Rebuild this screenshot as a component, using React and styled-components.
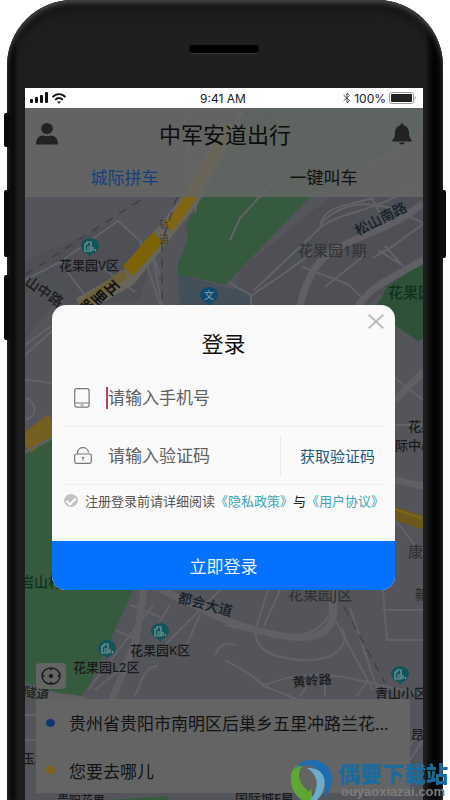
import React from 'react';
import styled, { createGlobalStyle } from 'styled-components';

const GlobalStyle = createGlobalStyle`
  * {
    box-sizing: border-box;
  }

  body {
    margin: 0;
    background: #fff;
    font-family: "Noto Sans", "Noto Sans CJK SC", sans-serif;
  }

  button, input {
    font-family: inherit;
  }
`;

const Page = styled.div`
  position: relative;
  min-height: 100vh;
  padding: 0 7px;
  display: flex;
  overflow: hidden;
`;

const Phone = styled.div`
  flex: 1;
  min-width: 0;
  display: flex;
  flex-direction: column;
  padding: 0 20px 0 18px;
  border-radius: 66px 66px 0 0;
  background: linear-gradient(
    to right,
    #040404 0,
    #0c0c0c 7px,
    #1f1f1f 11px,
    #1f1f1f calc(100% - 18px),
    #020202 calc(100% - 10px)
  );
  box-shadow: inset 0 3px 5px #4a4a4a, inset 0 8px 16px #101010;
`;

const SideButton = styled.span`
  position: absolute;
  top: ${(props) => props.$top}px;
  ${(props) => props.$side}: 4px;
  width: 6px;
  height: ${(props) => props.$length}px;
  border-radius: 2px;
  background: #0a0a0a;
`;

const TopBezel = styled.div`
  height: 88px;
  padding-top: 10px;
  display: flex;
  align-items: center;
  justify-content: center;
`;

const Speaker = styled.div`
  width: 70px;
  height: 8px;
  border-radius: 4px;
  background: #000;
  box-shadow: 0 1px 1px #333;
`;

const Screen = styled.div`
  flex: 1;
  display: flex;
  flex-direction: column;
`;

const StatusBar = styled.div`
  height: 20px;
  padding: 0 7px 0 5px;
  display: grid;
  grid-template-columns: 1fr auto 1fr;
  align-items: center;
  background: #fff;
  color: #222;
  font-family: Inter, "Liberation Sans", sans-serif;
  font-size: 12px;
`;

const StatusGroup = styled.div`
  display: flex;
  align-items: center;
  gap: 3px;
  justify-content: ${(props) => (props.$end ? 'flex-end' : 'flex-start')};
`;

const AppView = styled.div`
  position: relative;
  flex: 1;
  display: flex;
  flex-direction: column;
  justify-content: space-between;
  background: #54555a;
`;

const MapCanvas = styled.svg`
  position: absolute;
  inset: 0;
  width: 100%;
  height: 100%;
`;

const Header = styled.header`
  position: relative;
  background: rgba(101, 101, 101, 0.86);
`;

const TitleRow = styled.div`
  height: 52px;
  padding: 0 11px;
  display: flex;
  align-items: center;
  justify-content: space-between;
`;

const AppTitle = styled.h1`
  margin: 0;
  font-size: 22px;
  font-weight: 400;
  line-height: 28px;
  color: #0c0c0c;
`;

const IconButton = styled.button`
  display: flex;
  padding: 0;
  border: 0;
  background: none;
`;

const Tabs = styled.nav`
  display: flex;
`;

const Tab = styled.button`
  flex: 1;
  height: 37px;
  padding: 0 0 4px;
  border: 0;
  background: none;
  font-size: 17px;
  color: ${(props) => (props.$active ? '#14407c' : '#111')};
`;

const Footer = styled.div`
  position: relative;
  padding: 0 13px 7px 11px;
  display: flex;
  flex-direction: column;
  align-items: flex-start;
  gap: 10px;
`;

const LocateButton = styled.button`
  width: 30px;
  height: 26px;
  padding: 0;
  display: flex;
  align-items: center;
  justify-content: center;
  border: 0;
  border-radius: 4px;
  background: #626562;
`;

const RouteCard = styled.div`
  align-self: stretch;
  background: #646464;
`;

const RouteRow = styled.div`
  height: 47px;
  padding-left: 10px;
  display: flex;
  align-items: center;
  gap: 14px;
  font-size: 17px;
  white-space: nowrap;
  color: #121212;

  & + & {
    border-top: 1px solid #5f5f5f;
  }
`;

const Dot = styled.span`
  width: 9px;
  height: 8px;
  flex: none;
  border-radius: 50%;
  background: ${(props) => props.$color};
`;

const Overlay = styled.div`
  position: absolute;
  inset: 0;
  padding: 0 28px 13px 27px;
  display: flex;
  align-items: center;
`;

const Dialog = styled.form`
  position: relative;
  flex: 1;
  min-width: 0;
  overflow: hidden;
  border-radius: 14px;
  background: #fafafa;
`;

const CloseButton = styled(IconButton)`
  position: absolute;
  top: 9px;
  right: 11px;
`;

const DialogTitle = styled.h2`
  margin: 0;
  padding: 24px 0 12px;
  text-align: center;
  font-size: 22px;
  font-weight: 400;
  line-height: 28px;
  color: #111;
`;

const FieldRow = styled.div`
  height: 58px;
  margin: 0 10px 0 12px;
  padding-left: 10px;
  display: flex;
  align-items: center;
  border-bottom: 1px solid #f0f0f0;
`;

const FieldIcon = styled.label`
  width: 20px;
  margin-right: 12px;
  display: flex;
`;

const Field = styled.input`
  flex: 1;
  min-width: 0;
  height: 22px;
  padding: 0;
  border: 0;
  border-left: 2px solid ${(props) => (props.$active ? '#b0406c' : 'transparent')};
  outline: none;
  background: none;
  font-size: 17px;
  color: #333;

  &::placeholder {
    color: #606060;
    opacity: 1;
  }
`;

const CodeButton = styled.button`
  flex: none;
  height: 40px;
  padding: 0 10px 0 19px;
  border: 0;
  border-left: 1px solid #ececec;
  background: none;
  font-size: 15px;
  color: #1d587c;
`;

const Agreement = styled.div`
  height: 30px;
  margin-bottom: 26px;
  padding-left: 12px;
  display: flex;
  align-items: center;
  font-size: 13px;
  white-space: nowrap;
  color: #222;

  label {
    color: #555;
  }

  a {
    color: #3ea5b6;
    text-decoration: none;
  }
`;

const Checkbox = styled.input`
  appearance: none;
  width: 14px;
  height: 13px;
  margin: 0 7px 0 0;
  display: flex;
  justify-content: center;
  border-radius: 50%;
  background: #c2c2c2;

  &::after {
    content: '';
    width: 4px;
    height: 7px;
    margin-top: 2px;
    border: solid #fff;
    border-width: 0 2px 2px 0;
    transform: rotate(45deg);
  }
`;

const SubmitButton = styled.button`
  width: 100%;
  height: 49px;
  display: block;
  padding: 0;
  border: 0;
  background: #0572ff;
  font-size: 17px;
  color: #e8f2ff;
`;

const Watermark = styled.div`
  position: absolute;
  right: 2px;
  bottom: 0;
  height: 42px;
  display: flex;
  align-items: flex-start;
  gap: 4px;
`;

const SiteName = styled.div`
  padding-top: 3px;
  text-align: center;
  font-size: 22px;
  font-weight: 900;
  line-height: 24px;
  color: #1b6c9c;
`;

const SiteUrl = styled.div`
  text-align: center;
  font-family: "Liberation Sans", sans-serif;
  font-size: 13px;
  font-weight: 700;
  line-height: 14px;
  color: #7c7c7c;
`;

const SignalIcon = () => (
  <svg width="19" height="12" viewBox="0 0 19 12" fill="#111">
    <rect x="0" y="7" width="3" height="4" rx="1" />
    <rect x="5" y="5" width="3" height="6" rx="1" />
    <rect x="10" y="3" width="3" height="8" rx="1" />
    <rect x="15" y="0" width="3" height="11" rx="1" />
  </svg>
);

const WifiIcon = () => (
  <svg width="14" height="11" viewBox="0 0 14 11" fill="none" stroke="#111" strokeWidth="1.8">
    <path d="M.6 4.2C4.200.2 9.800.2 13.400 4.200" />
    <path d="M3.200 6.800c2.200-2.400 5.400-2.400 7.600 0" />
    <path d="M5 8.600h4L7 10.800z" fill="#111" stroke="none" />
  </svg>
);

const BluetoothIcon = () => (
  <svg width="8" height="12" viewBox="0 0 8 12" fill="none" stroke="#555" strokeWidth="1">
    <path d="M.6 3.200l6 5.200L4 11V1l2.600 2.600-6 5.200" />
  </svg>
);

const BatteryIcon = () => (
  <svg width="27" height="12" viewBox="0 0 27 12">
    <rect x=".5" y=".5" width="24" height="11" rx="2.500" fill="none" stroke="#999" />
    <rect x="2" y="2" width="21" height="8" rx="1" fill="#222" />
    <path d="M25.700 4v4c1.300-.6 1.300-3.400 0-4z" fill="#999" />
  </svg>
);

const UserIcon = () => (
  <svg width="22" height="22" viewBox="0 0 22 22" fill="#222">
    <ellipse cx="11" cy="5.500" rx="5.800" ry="5.500" />
    <path d="M0 21.500c0-6 3-9 7-9 2.500 1 5.500 1 8 0 4 0 7 3 7 9z" />
  </svg>
);

const BellIcon = () => (
  <svg width="20" height="22" viewBox="0 0 20 22" fill="#222">
    <path d="M8.600 2.200C8.600-.4 11.400-.4 11.400 2.200 15 3 17 6 17 9.500c0 4 .6 5.800 2.600 7.500v1.400H.4V17C2.400 15.300 3 13.500 3 9.500 3 6 5 3 8.600 2.200z" />
    <path d="M7 19.500h6c-.8 2.600-5.200 2.600-6 0z" />
  </svg>
);

const CloseIcon = () => (
  <svg width="16" height="15" viewBox="0 0 16 15" stroke="#bdbdbd" strokeWidth="2">
    <path d="M.7.7l14.600 13.600M15.300.7L.7 14.300" />
  </svg>
);

const MobileIcon = () => (
  <svg width="16" height="20" viewBox="0 0 16 20" fill="none" stroke="#777" strokeWidth="1.200">
    <rect x=".7" y=".7" width="14.400" height="18.400" rx="2" />
    <path d="M.7 15h14.400M6.500 17h3" />
  </svg>
);

const LockIcon = () => (
  <svg width="18" height="17" viewBox="0 0 18 17" fill="none" stroke="#777" strokeWidth="1.200">
    <rect x=".7" y="7" width="16.600" height="9.300" rx="1.500" />
    <path d="M3.500 7V5.500c0-6.400 10.800-6.400 11 0M9 10v3.600M7.800 10.500h2.400" />
  </svg>
);

const TargetIcon = () => (
  <svg width="20" height="18" viewBox="0 0 20 18" fill="none" stroke="#1a1a1a" strokeWidth="1.400">
    <ellipse cx="10" cy="9" rx="9" ry="8" />
    <path d="M10 1v2.500M10 14.500v2.500M1 9h2.500M16.500 9h2.500" />
    <circle cx="10" cy="9" r="1.400" fill="#1a1a1a" />
  </svg>
);

const WatermarkLogo = () => (
  <svg width="44" height="42" viewBox="0 0 44 42">
    <path d="M1 24C-1 10 9 4 15 6 7 11 7 22 15 30l4 4 2-4 2 12H12C6 38 2 32 1 24z" fill="#5fa632" />
    <path d="M5 11C15-4 38 0 42 18c1 8-2 16-8 22 2-12 2-22-6-28C21 6 11 6 5 11z" fill="#1d6db0" />
    <path d="M17 10c13-1 20 8 17 20-1 5-4 9-7 12h-7c9-10 10-24-3-32z" fill="#6aaecb" />
  </svg>
);

const Pin = ({ x, y }) => (
  <g transform={`translate(${x} ${y})`}>
    <path d="M-9-1a9 8 0 0118 0c0 4-4 7-7 8l-2 3-2-3c-3-1-7-4-7-8z" fill="#12545a" />
    <path d="M-5 4v-7h2v-2h4v9zM-3 0h3M-3 2h3M3 4V0M5.500 4V2" fill="none" stroke="#7b9a9c" strokeWidth="1.200" />
  </g>
);

const labels = [
  { x: 223, y: 122, size: 13, color: '#404044', text: '镇v区2栋' },
  { x: 59, y: 270, size: 13, text: '花果园V区' },
  { x: 24, y: 284, size: 14, rotate: 34, text: '山中路' },
  { x: 358, y: 236, size: 14, rotate: -27, color: '#16202a', text: '松山南路' },
  { x: 298, y: 256, size: 15, color: '#36363a', text: '花果园1期' },
  { x: 388, y: 298, size: 15, color: '#10301d', text: '花果园' },
  { x: 408, y: 431, size: 13, text: '花果' },
  { x: 382, y: 450, size: 13, text: '国际中心' },
  { x: 408, y: 557, size: 15, color: '#333', text: '康宁' },
  { x: 415, y: 599, size: 13, color: '#2c2c2c', text: '新' },
  { x: 20, y: 587, size: 14, color: '#0f2f1e', text: '岩山村' },
  { x: 177, y: 602, size: 14, rotate: 15, color: '#16202a', text: '都会大道' },
  { x: 288, y: 600, size: 15, color: '#333', text: '花果园J区' },
  { x: 130, y: 655, size: 13, text: '花果园K区' },
  { x: 73, y: 672, size: 13, text: '花果园L2区' },
  { x: 293, y: 687, size: 13, rotate: -5, text: '黄岭路' },
  { x: 375, y: 698, size: 13, text: '青山小区' },
  { x: 23, y: 696, size: 13, rotate: 8, color: '#14241e', text: '隧道' },
  { x: 22, y: 763, size: 13, text: '玉坊' },
  { x: 411, y: 739, size: 13, text: '昂' },
  { x: 57, y: 805, size: 12, text: '贵阳花果' },
  { x: 235, y: 803, size: 13, text: '国际城F星' },
];

const CityMap = () => (
  <MapCanvas viewBox="25 108 398 692" preserveAspectRatio="xMidYMin slice">
    <rect x="25" y="108" width="398" height="692" fill="#54555a" />
    <path d="M25 260L118 221 152 252 140 300 52 305 25 340z" fill="#4e5056" />
    <path d="M240 270L330 197H423V255L370 305H230z" fill="#4f5056" />

    {/* parks and water */}
    <path d="M178 272q14 3 16 6l56 16v14H180z" fill="#445059" />
    <path d="M245 108L203 197 186 224 188 238 178 264v11l16 2 31 8L310 197 423 130V108z" fill="#365a3e" />
    <path d="M423 262L388 286 376 306 395 325 418 341 423 339z" fill="#2f5138" />
    <path d="M25 454l28-15v145l80 6 -24 54 -18 38-12 17-54-17z" fill="#365a3e" />
    <path d="M108 800l60-4v4z" fill="#365a3e" />

    {/* minor roads */}
    <g fill="none" stroke="#626368" strokeWidth="2">
      <path d="M25 280L60 262 118 221 152 252 160 275M60 262l30 40M95 262l40 30M140 243l20 62M150 243l12 62" />
      <path d="M185 108c-2 40 16 80 10 105M230 240l10-22 35-38 30-35 35 20 50-8 20-25" />
      <path d="M228 282l23 13v10M254 290l66-62c20-18 60-15 103-48M252 295l30-20 30-22" />
      <path d="M320 228c2-24 30-22 52-30M320 224c30-30 60-18 74-15l29 14M372 198l12 24M373 258l20-12 30-22M378 250l27 17M385 246l16 18M302 267l46 17 14 14M325 287l40-32" />
      <path d="M25 380c30 2 20 5 35 2M25 420c15-5 10-20 0-22M25 355l28-25M25 345l28-20" />
      <path d="M395 400l28-25M395 378l28 22M395 425h28M395 520l28 35" />
      <path d="M115 630l24 10M130 605l30 12M95 690l36-30M88 690l65-85M134 696c8-10 8-30 24-30M200 615l-18 40M170 605l-16 26" />
      <path d="M225 625c60 14 90 18 105-12V590M268 590l-10 32c-6 15 0 28 16 33 50 15 80-5 68-28" />
      <path d="M225 660l25 14 14 12 35 14M280 590l-16 36M262 686c50-20 90-8 122 0l39 8M335 620l38 70M350 608l20 60 10 28M383 590l4 50h36M383 610h40M300 697l8-14M325 697V680M356 697l12-16" />
      <path d="M25 740h11M25 715h11M410 745l13-18M410 760l13-20M160 650l60-60M215 655c5-12 12-12 20-10" />
    </g>

    {/* main roads */}
    <g fill="none" stroke="#606064" strokeWidth="7">
      <path d="M300 306c7-30 18-47 36-57 25-15 60-22 87-46" />
      <path d="M358 306c15-22 35-28 65-46" />
      <path d="M144 590l-8 50-24 60" />
      <path d="M160 589l65 31c50 18 108 32 109-10V590" />
      <path d="M395 480l28 6M395 400l28-28" />
      <path d="M25 690l30 6 30 4" />
    </g>

    {/* highways */}
    <g fill="none">
      <path d="M238 108L190 200 128 278 80 306" stroke="#68665a" strokeWidth="17" />
      <path d="M230 125L187 203 168 228" stroke="#806612" strokeWidth="11" />
      <path d="M158 237L128 271" stroke="#7c6305" strokeWidth="14" />
      <path d="M126 273L82 306" stroke="#6c6039" strokeWidth="10" />
      <path d="M25 445l29-23" stroke="#746020" strokeWidth="20" />
      <path d="M25 452l29-15" stroke="#5d6258" strokeWidth="3" />
      <path d="M394 513l30 10" stroke="#6c581a" strokeWidth="13" />
      <path d="M394 509l30 10" stroke="#7d6720" strokeWidth="2" />
    </g>

    {/* railways */}
    <g fill="none" stroke="#3f4044" strokeWidth="1.500" strokeDasharray="9 7">
      <path d="M25 275L145 197" />
      <path d="M177 197l-15 45v63" />
      <path d="M344 607l41 76" />
    </g>

    {labels.map(({ x, y, size, rotate = 0, color = '#1a1a1d', text }) => (
      <text
        key={`${text}-${x}`}
        transform={`translate(${x} ${y}) rotate(${rotate})`}
        fontSize={size}
        fontWeight="500"
        fill={color}
      >
        {text}
      </text>
    ))}
    <g fontSize="15" fontWeight="700" fill="#141416">
      <text transform="translate(103 286) rotate(45)">五</text>
      <text transform="translate(90 296) rotate(45)">里</text>
      <text transform="translate(77 306) rotate(45)">路</text>
    </g>
    <g fontSize="10" fill="#3f3d35">
      <text x="159" y="228">轨</text>
      <text x="159" y="243">道</text>
    </g>

    <Pin x={90} y={247} />
    <Pin x={160} y={632} />
    <Pin x={107} y={649} />
    <Pin x={400} y={675} />
    <g transform="translate(209 296)">
      <path d="M-9-1a9 8 0 0118 0c0 4-4 7-7 8l-2 3-2-3c-3-1-7-4-7-8z" fill="#124a6c" />
      <text x="-5" y="3" fontSize="10" fill="#8da4b3">文</text>
    </g>
  </MapCanvas>
);

const LoginDialog = () => (
  <Overlay>
    <Dialog onSubmit={(e) => e.preventDefault()}>
      <CloseButton type="button" aria-label="关闭"><CloseIcon /></CloseButton>
      <DialogTitle>登录</DialogTitle>
      <FieldRow>
        <FieldIcon htmlFor="phone" aria-label="手机号"><MobileIcon /></FieldIcon>
        <Field id="phone" type="tel" placeholder="请输入手机号" $active />
      </FieldRow>
      <FieldRow>
        <FieldIcon htmlFor="code" aria-label="验证码"><LockIcon /></FieldIcon>
        <Field id="code" type="text" placeholder="请输入验证码" />
        <CodeButton type="button">获取验证码</CodeButton>
      </FieldRow>
      <Agreement>
        <Checkbox id="agree" type="checkbox" />
        <label htmlFor="agree">注册登录前请详细阅读</label>
        <a href="#privacy">《隐私政策》</a>
        与
        <a href="#terms">《用户协议》</a>
      </Agreement>
      <SubmitButton type="submit">立即登录</SubmitButton>
    </Dialog>
  </Overlay>
);

const App = () => {
  return (
    <Page>
      <GlobalStyle />
      <SideButton $side="left" $top={113} $length={34} />
      <SideButton $side="left" $top={190} $length={67} />
      <SideButton $side="left" $top={275} $length={65} />
      <SideButton $side="right" $top={190} $length={68} />
      <Phone>
        <TopBezel>
          <Speaker />
        </TopBezel>
        <Screen>
          <StatusBar>
            <StatusGroup>
              <SignalIcon />
              <WifiIcon />
            </StatusGroup>
            <span>9:41 AM</span>
            <StatusGroup $end>
              <BluetoothIcon />
              <span>100%</span>
              <BatteryIcon />
            </StatusGroup>
          </StatusBar>
          <AppView>
            <CityMap />
            <Header>
              <TitleRow>
                <IconButton type="button" aria-label="个人中心"><UserIcon /></IconButton>
                <AppTitle>中军安道出行</AppTitle>
                <IconButton type="button" aria-label="消息"><BellIcon /></IconButton>
              </TitleRow>
              <Tabs>
                <Tab type="button" $active>城际拼车</Tab>
                <Tab type="button">一键叫车</Tab>
              </Tabs>
            </Header>
            <Footer>
              <LocateButton type="button" aria-label="定位"><TargetIcon /></LocateButton>
              <RouteCard>
                <RouteRow>
                  <Dot $color="#10356f" />
                  贵州省贵阳市南明区后巢乡五里冲路兰花...
                </RouteRow>
                <RouteRow>
                  <Dot $color="#80611c" />
                  您要去哪儿
                </RouteRow>
              </RouteCard>
            </Footer>
            <LoginDialog />
          </AppView>
        </Screen>
      </Phone>
      <Watermark>
        <WatermarkLogo />
        <div>
          <SiteName>偶要下载站</SiteName>
          <SiteUrl>ouyaoxiazai.com</SiteUrl>
        </div>
      </Watermark>
    </Page>
  );
};

export default App;
